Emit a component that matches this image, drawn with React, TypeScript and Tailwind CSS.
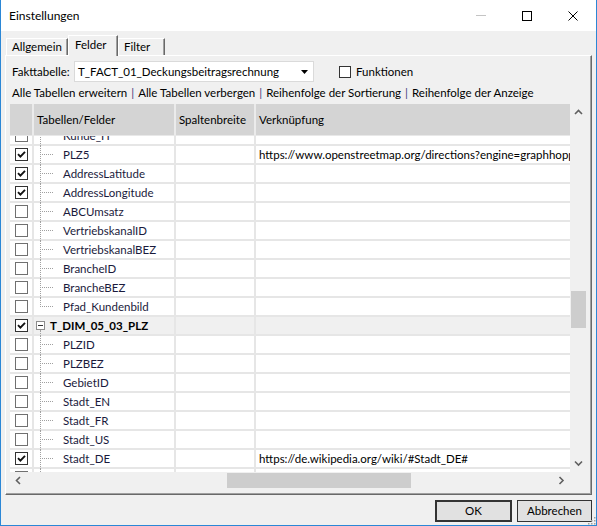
import React from "react";

type Row = {
  name: string;
  checked?: boolean;
  group?: boolean;
  last?: boolean;
  link?: string;
};

const rows: Row[] = [
  { name: "Kunde_H" },
  {
    name: "PLZ5",
    checked: true,
    link: "https://www.openstreetmap.org/directions?engine=graphhopper_car",
  },
  { name: "AddressLatitude", checked: true },
  { name: "AddressLongitude", checked: true },
  { name: "ABCUmsatz" },
  { name: "VertriebskanalID" },
  { name: "VertriebskanalBEZ" },
  { name: "BrancheID" },
  { name: "BrancheBEZ" },
  { name: "Pfad_Kundenbild", last: true },
  { name: "T_DIM_05_03_PLZ", group: true, checked: true },
  { name: "PLZID" },
  { name: "PLZBEZ" },
  { name: "GebietID" },
  { name: "Stadt_EN" },
  { name: "Stadt_FR" },
  { name: "Stadt_US" },
  {
    name: "Stadt_DE",
    checked: true,
    link: "https://de.wikipedia.org/wiki/#Stadt_DE#",
  },
  { name: "Stadt_IT" },
];

function CheckBox({ checked }: { checked?: boolean }) {
  return (
    <div
      className={`flex h-[13px] w-[13px] items-center justify-center border bg-white ${
        checked ? "border-[#333333]" : "border-[#707070]"
      }`}
    >
      {checked && (
        <svg width="9" height="9" viewBox="0 0 9 9">
          <path
            d="M1 4.2 L3.4 6.6 L8 1.8"
            fill="none"
            stroke="#111"
            strokeWidth="1.9"
          />
        </svg>
      )}
    </div>
  );
}

function Chevron({ dir }: { dir: "up" | "down" | "left" | "right" }) {
  const d = {
    up: "M1 5 L4.5 1.5 L8 5",
    down: "M1 1.5 L4.5 5 L8 1.5",
    left: "M5 1 L1.5 4.5 L5 8",
    right: "M1.5 1 L5 4.5 L1.5 8",
  }[dir];
  const vertical = dir === "up" || dir === "down";
  return (
    <svg
      width={vertical ? 9 : 7}
      height={vertical ? 7 : 9}
      viewBox={vertical ? "0 0 9 7" : "0 0 7 9"}
    >
      <path d={d} fill="none" stroke="#606060" strokeWidth="1.6" />
    </svg>
  );
}

function TreeCell({ row }: { row: Row }) {
  if (row.group) {
    return (
      <div className="relative flex h-full items-center bg-[#f0f0f0] pl-[2px]">
        <div className="absolute left-[6px] top-[13px] -bottom-[2px] border-l border-dotted border-[#a0a0a0]" />
        <div className="relative flex h-[9px] w-[9px] items-center justify-center border border-[#8c8c8c] bg-white">
          <div className="h-px w-[5px] bg-[#333]" />
        </div>
        <span className="ml-[5px] font-bold text-black">{row.name}</span>
      </div>
    );
  }
  return (
    <div className="relative flex h-full items-center bg-white pl-[29px]">
      <div
        className={`absolute left-[6px] top-0 border-l border-dotted border-[#a0a0a0] ${
          row.last ? "h-[9px]" : "-bottom-[2px]"
        }`}
      />
      <div className="absolute left-[8px] top-[8px] w-[11px] border-t border-dotted border-[#a0a0a0]" />
      <span className="text-[#1a1a3c]">{row.name}</span>
    </div>
  );
}

function GridRow({ row }: { row: Row }) {
  const cell = row.group ? "bg-[#f0f0f0]" : "bg-white";
  return (
    <div className="grid h-[17px] shrink-0 grid-cols-[22px_140px_78px_314px] gap-x-[2px]">
      <div className={`flex items-center pl-[5px] ${cell}`}>
        <CheckBox checked={row.checked} />
      </div>
      <TreeCell row={row} />
      <div className={cell} />
      <div
        className={`overflow-hidden whitespace-nowrap pl-[3px] leading-[17px] text-black ${cell}`}
      >
        {row.link}
      </div>
    </div>
  );
}

function Tab({
  label,
  selected,
  width,
}: {
  label: string;
  selected?: boolean;
  width: string;
}) {
  return (
    <div
      className={`relative flex items-start whitespace-nowrap border-l border-t border-r border-l-white border-t-white border-r-[#696969] bg-[#f0f0f0] shadow-[inset_-1px_0_0_#a0a0a0] ${width} ${
        selected
          ? "z-10 -mb-px h-[21px] pl-[6px] pt-[1px]"
          : "h-[17px] pl-[5px] pt-0"
      }`}
    >
      <span className="leading-[15px]">{label}</span>
    </div>
  );
}

export default function App() {
  return (
    <div className="relative flex h-[526px] w-[597px] flex-col border-x border-b border-[#2b87d6] bg-[#f0f0f0] font-['Lato',sans-serif] text-[11.5px] text-black">
      {/* title bar */}
      <div className="flex h-[31px] shrink-0 items-center bg-white pl-[8px] text-[12px]">
        <span className="flex-1">Einstellungen</span>
        <div className="flex items-center">
          <div className="flex w-[46px] justify-center">
            <div className="h-px w-[10px] bg-[#c4c4c4]" />
          </div>
          <div className="flex w-[46px] justify-center">
            <div className="h-[10px] w-[10px] border border-black" />
          </div>
          <div className="flex w-[46px] justify-center">
            <svg width="10" height="10" viewBox="0 0 10 10">
              <path d="M0.5 0.5 L9.5 9.5 M9.5 0.5 L0.5 9.5" stroke="#000" strokeWidth="1" />
            </svg>
          </div>
        </div>
      </div>

      {/* tabs */}
      <div className="flex h-[24px] shrink-0 items-end pl-[5px]">
        <Tab label="Allgemein" width="w-[62px]" />
        <Tab label="Felder" width="w-[50px]" selected />
        <Tab label="Filter" width="w-[47px]" />
      </div>

      {/* tab panel */}
      <div className="ml-[4px] flex h-[440px] w-[587px] shrink-0 flex-col border-b border-l border-r border-t border-b-[#696969] border-l-white border-r-[#696969] border-t-white shadow-[inset_-1px_-1px_0_#a0a0a0]">
        <div className="mt-[5px] flex h-[21px] items-center">
          <span className="w-[68px] whitespace-nowrap pl-[6px]">Fakttabelle:</span>
          <div className="flex h-[21px] w-[240px] items-center justify-between border border-[#dadada] bg-white pl-[3px] pr-[5px]">
            <span>T_FACT_01_Deckungsbeitragsrechnung</span>
            <svg width="7" height="4" viewBox="0 0 7 4">
              <path d="M0 0 L7 0 L3.5 4 Z" fill="#000" />
            </svg>
          </div>
          <div className="ml-[25px] flex items-center gap-[5px]">
            <div className="h-[12px] w-[12px] border border-[#333] bg-white" />
            <span>Funktionen</span>
          </div>
        </div>

        <div className="mt-px flex h-[19px] items-center whitespace-nowrap pl-[6px]">
          <span>Alle Tabellen erweitern</span>
          <span className="mx-[4px] text-[#3d3d7a]">|</span>
          <span>Alle Tabellen verbergen</span>
          <span className="mx-[4px] text-[#3d3d7a]">|</span>
          <span>Reihenfolge der Sortierung</span>
          <span className="mx-[4px] text-[#3d3d7a]">|</span>
          <span>Reihenfolge der Anzeige</span>
        </div>

        {/* data grid */}
        <div className="ml-[4px] mt-[2px] flex w-[576px] flex-col">
          <div className="flex h-[368px]">
            <div className="flex w-[560px] flex-col gap-px bg-[#e8e8e8]">
              <div className="grid h-[31px] shrink-0 grid-cols-[22px_140px_78px_314px] gap-x-[2px] bg-[#ebebeb]">
                <div className="bg-[#d4d4d4]" />
                <div className="flex items-center bg-[#d4d4d4] pl-[3px]">Tabellen/Felder</div>
                <div className="flex items-center bg-[#d4d4d4] pl-[3px]">Spaltenbreite</div>
                <div className="flex items-center bg-[#d4d4d4] pl-[3px]">Verknüpfung</div>
              </div>
              <div className="h-[336px] overflow-hidden bg-[#e6e6e6]">
                <div className="-mt-[9px] flex flex-col gap-y-[2px]">
                  {rows.map((r) => (
                    <GridRow key={r.name} row={r} />
                  ))}
                </div>
              </div>
            </div>
            <div className="flex w-[16px] flex-col bg-[#f0f0f0]">
              <div className="flex h-[17px] items-center justify-center">
                <Chevron dir="up" />
              </div>
              <div className="flex-1 pt-[170px]">
                <div className="ml-px h-[37px] w-[15px] bg-[#cdcdcd]" />
              </div>
              <div className="flex h-[17px] items-center justify-center">
                <Chevron dir="down" />
              </div>
            </div>
          </div>
          <div className="flex h-[16px]">
            <div className="flex w-[560px] items-center bg-[#f0f0f0]">
              <div className="flex w-[17px] justify-center">
                <Chevron dir="left" />
              </div>
              <div className="flex h-[15px] flex-1 items-center">
                <div className="ml-[200px] h-[15px] w-[184px] bg-[#cdcdcd]" />
              </div>
              <div className="flex w-[17px] justify-center">
                <Chevron dir="right" />
              </div>
            </div>
            <div className="w-[16px] bg-[#f0f0f0]" />
          </div>
        </div>
      </div>

      {/* buttons */}
      <div className="mt-[5px] flex justify-end gap-[5px] pr-[4px]">
        <button className="h-[22px] w-[77px] border border-[#333] bg-[#e1e1e1] shadow-[inset_0_0_0_1px_#333]">
          OK
        </button>
        <button className="h-[22px] w-[75px] border border-[#333] bg-[#e1e1e1]">
          Abbrechen
        </button>
      </div>

      <svg
        className="absolute bottom-0 right-0"
        width="10"
        height="10"
        viewBox="0 0 10 10"
      >
        {[
          [8, 2],
          [8, 5],
          [5, 5],
          [8, 8],
          [5, 8],
          [2, 8],
        ].map(([x, y]) => (
          <rect key={`${x}-${y}`} x={x} y={y} width="1.5" height="1.5" fill="#a0a0a0" />
        ))}
      </svg>
    </div>
  );
}
